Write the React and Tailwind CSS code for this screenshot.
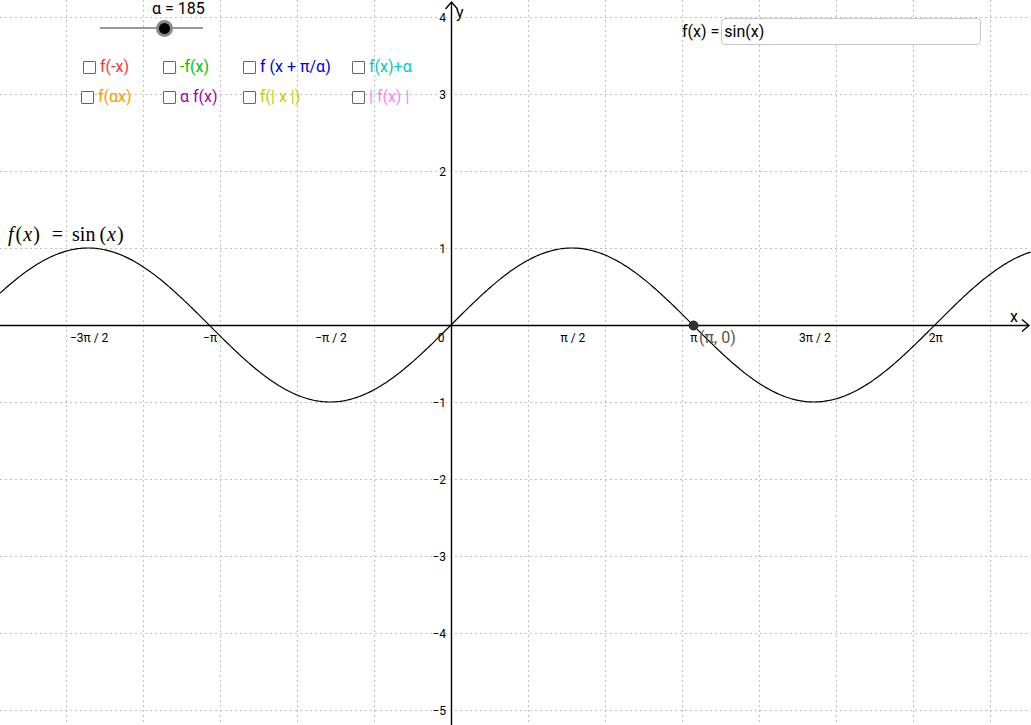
import React from "react";

const OX = 451;
const OY = 325;
const U = 77;

function curvePath() {
  const pts = [];
  for (let x = 0; x <= 1031; x += 1.5) {
    const y = OY - U * Math.sin((x - OX) / U);
    pts.push(`${x.toFixed(1)},${y.toFixed(2)}`);
  }
  return "M" + pts.join(" L");
}

const vGrid = [];
for (let k = -6; k <= 7; k++) {
  const x = OX + k * U;
  if (k !== 0 && x > 0 && x < 1031) vGrid.push(x);
}
const hGrid = [];
for (let k = -5; k <= 4; k++) {
  const y = OY - k * U;
  if (k !== 0) hGrid.push({ y, k });
}

const piStep = (Math.PI / 2) * U;
const xLabels = [
  { t: "\u22123\u03c0 / 2", k: -3 },
  { t: "\u2212\u03c0", k: -2 },
  { t: "\u2212\u03c0 / 2", k: -1 },
  { t: "\u03c0 / 2", k: 1 },
  { t: "\u03c0", k: 2 },
  { t: "3\u03c0 / 2", k: 3 },
  { t: "2\u03c0", k: 4 },
];

function Graph() {
  return (
    <svg
      className="absolute inset-0"
      width="1031"
      height="725"
      viewBox="0 0 1031 725"
      style={{ fontFamily: "Roboto, 'Liberation Sans', sans-serif" }}
    >
      <g stroke="#c0c0c0" strokeWidth="1" strokeDasharray="2 3">
        {vGrid.map((x) => (
          <line key={"v" + x} x1={x + 0.5} y1="0" x2={x + 0.5} y2="725" />
        ))}
        {hGrid.map(({ y }) => (
          <line key={"h" + y} x1="0" y1={y + 0.5} x2="1031" y2={y + 0.5} />
        ))}
      </g>
      {/* axes */}
      <g stroke="#000" strokeWidth="1.4" fill="none">
        <line x1="0" y1={OY + 0.5} x2="1029" y2={OY + 0.5} />
        <polyline points={`1022,${OY - 5.5} 1029,${OY + 0.5} 1022,${OY + 6.5}`} />
        <line x1={OX + 0.5} y1="725" x2={OX + 0.5} y2="2" />
        <polyline points={`${OX - 5.5},9 ${OX + 0.5},2 ${OX + 6.5},9`} />
      </g>
      <text x="1010" y="322" fontSize="16" fill="#000">x</text>
      <text x="456" y="18" fontSize="16" fill="#000">y</text>
      {/* x labels */}
      <g fontSize="12" fill="#000" textAnchor="middle">
        {xLabels.map((l) => (
          <text key={l.k} x={OX + l.k * piStep + 1} y="342">
            {l.t}
          </text>
        ))}
        <text x="441" y="342">0</text>
      </g>
      <g fontSize="12" fill="#000" textAnchor="end">
        {hGrid.map(({ y, k }) => (
          <text key={"yl" + k} x="446" y={y + 4.5}>
            {k < 0 ? "\u2212" + -k : k}
          </text>
        ))}
      </g>
      {/* curve */}
      <path d={curvePath()} fill="none" stroke="#000" strokeWidth="1.2" />
      {/* point */}
      <circle cx="693.5" cy={OY + 0.5} r="4.5" fill="#333" stroke="#222" strokeWidth="1" />
      <text x="699" y="343" fontSize="16" fill="#555">{"(\u03c0, 0)"}</text>
      {/* formula */}
      <text
        x="8"
        y="241"
        fontSize="20"
        fill="#000"
        style={{ fontFamily: "'Liberation Serif', 'DejaVu Serif', serif" }}
      >
        <tspan fontStyle="italic">f</tspan>
        <tspan dx="2">(</tspan>
        <tspan fontStyle="italic" dx="1">x</tspan>
        <tspan dx="1">)</tspan>
        <tspan dx="12">=</tspan>
        <tspan dx="9">sin</tspan>
        <tspan dx="4">(</tspan>
        <tspan fontStyle="italic" dx="1">x</tspan>
        <tspan dx="1">)</tspan>
      </text>
    </svg>
  );
}

function Box() {
  return <span className="inline-block w-[13px] h-[13px] border-[1.5px] border-[#666] rounded-[1px] bg-white mr-[4px] shrink-0" />;
}

function Check({ color, label, w }) {
  return (
    <div className={`flex items-center ${w}`}>
      <Box />
      <span className={`text-[16px] leading-none ${color}`}>{label}</span>
    </div>
  );
}

export default function App() {
  return (
    <div
      className="relative w-[1031px] h-[725px] overflow-hidden bg-white"
      style={{ fontFamily: "Roboto, 'Liberation Sans', sans-serif" }}
    >
      <Graph />

      {/* slider */}
      <div className="absolute left-[100px] top-0 w-[103px] flex flex-col items-start">
        <div className="text-[16px] leading-[18px] text-black ml-[52px] whitespace-nowrap">α = 185</div>
        <div className="relative w-full h-[20px] flex items-center">
          <div className="w-full h-[2px] bg-[#999]" />
          <div className="absolute left-[56px] top-[2px] w-[17px] h-[17px] rounded-full bg-black border-[3px] border-[#888]" />
        </div>
      </div>

      {/* checkboxes */}
      <div className="absolute left-[83px] top-[58px] flex flex-col gap-[12px]">
        <div className="flex h-[18px]">
          <Check color="text-[#ff3333]" label="f(-x)" w="w-[80px]" />
          <Check color="text-[#00c000]" label="-f(x)" w="w-[80px]" />
          <Check color="text-[#0000dd]" label="f (x + π/α)" w="w-[109px]" />
          <Check color="text-[#00c8c8]" label="f(x)+α" w="w-[90px]" />
        </div>
        <div className="flex h-[18px] -ml-[2px]">
          <Check color="text-[#ff9900]" label="f(αx)" w="w-[82px]" />
          <Check color="text-[#aa00aa]" label="α f(x)" w="w-[80px]" />
          <Check color="text-[#cccc00]" label="f(| x |)" w="w-[109px]" />
          <Check color="text-[#ff80ff]" label="| f(x) |" w="w-[90px]" />
        </div>
      </div>

      {/* input */}
      <div className="absolute left-[682px] top-[18px] flex items-center">
        <span className="text-[16px] text-black mr-[2px]">f(x) =</span>
        <div className="w-[260px] h-[27px] border border-[#c8c8c8] rounded-[4px] bg-white flex items-center px-[2px] text-[16px] text-black">
          sin(x)
        </div>
      </div>
    </div>
  );
}
